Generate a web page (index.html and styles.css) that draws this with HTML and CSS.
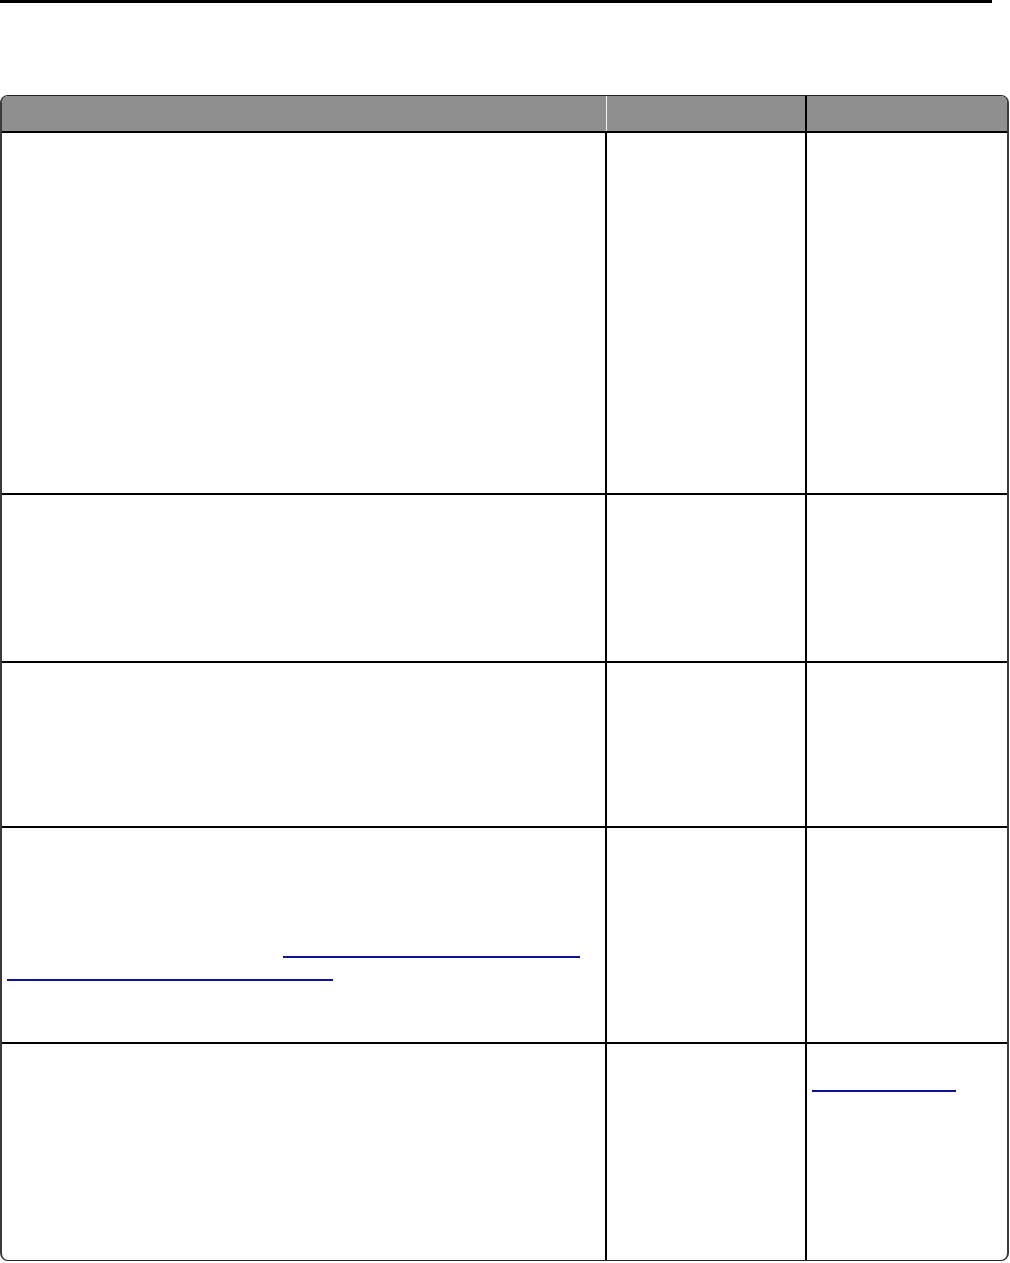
FILE: index.html
```html
<!DOCTYPE html>
<html lang="en">
<head>
    <meta charset="UTF-8">
    <title>Table</title>
    <link rel="stylesheet" href="styles.css">
</head>
<body>
    <div class="page-rule"></div>

    <div class="table">
        <div class="row head">
            <div class="cell"></div>
            <div class="cell light-divider"></div>
            <div class="cell"></div>
        </div>

        <div class="row r1">
            <div class="cell"></div>
            <div class="cell"></div>
            <div class="cell"></div>
        </div>

        <div class="row r2">
            <div class="cell"></div>
            <div class="cell"></div>
            <div class="cell"></div>
        </div>

        <div class="row r3">
            <div class="cell"></div>
            <div class="cell"></div>
            <div class="cell"></div>
        </div>

        <div class="row r4">
            <div class="cell links">
                <a class="link-line first" href="#"></a>
                <a class="link-line second" href="#"></a>
            </div>
            <div class="cell"></div>
            <div class="cell"></div>
        </div>

        <div class="row r5">
            <div class="cell"></div>
            <div class="cell"></div>
            <div class="cell short-link">
                <a class="link-line third" href="#"></a>
            </div>
        </div>
    </div>
</body>
</html>
```

FILE: styles.css
```css
body {
    margin: 0;
    background-color: #ffffff;
    font-family: "Liberation Sans", Arial, sans-serif;
}

.page-rule {
    width: 992px;
    height: 3px;
    background-color: #000000;
}

/* Table frame */
.table {
    box-sizing: border-box;
    width: 1009px;
    margin-top: 92px;
    border: 1px solid #222222;
    border-left: 2px solid #3a3a3a;
    border-right: 2px solid #3a3a3a;
    border-radius: 8px;
    overflow: hidden;
}

.row {
    display: grid;
    grid-template-columns: 603px 200px 1fr;
    border-top: 2px solid #000000;
}

.row .cell + .cell {
    border-left: 2px solid #000000;
}

.head {
    border-top: none;
    height: 35px;
    background-color: #8f8f8f;
}

.head .cell.light-divider {
    border-left: 1px solid #f2f2f2;
    margin-left: 1px;
}

.r1 { height: 360px; }
.r2 { height: 166px; }
.r3 { height: 163px; }
.r4 { height: 214px; }
.r5 { height: 216px; }

/* Link underlines */
.link-line {
    display: block;
    height: 0;
    border-bottom: 2px solid #12129c;
}

.links {
    padding: 128px 0 0 5px;
}

.link-line.first {
    margin-left: 276px;
    width: 297px;
}

.link-line.second {
    margin-top: 21px;
    width: 326px;
}

.short-link {
    padding: 46px 0 0 5px;
}

.link-line.third {
    width: 144px;
}
```
